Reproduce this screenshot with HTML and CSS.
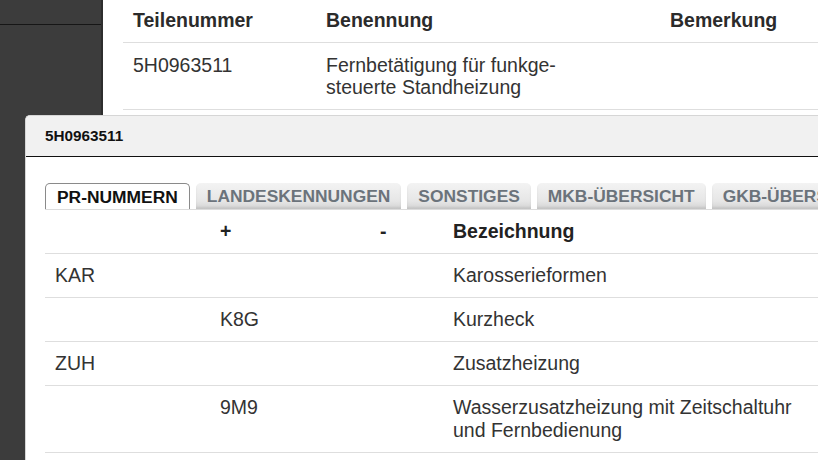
FILE: index.html
```html
<!DOCTYPE html>
<html lang="de">
<head>
<meta charset="utf-8">
<title>Teile</title>
<link rel="stylesheet" href="styles.css">
</head>
<body>
<div class="page">
  <aside class="sidebar">
    <div class="sidebar-top"></div>
  </aside>
  <main class="main">
    <table class="parts">
      <thead>
        <tr><th class="c-nr">Teilenummer</th><th class="c-name">Benennung</th><th>Bemerkung</th></tr>
      </thead>
      <tbody>
        <tr><td>5H0963511</td><td>Fernbetätigung für funkge-<br>steuerte Standheizung</td><td></td></tr>
      </tbody>
    </table>
  </main>
</div>

<section class="dialog">
  <header class="dialog-head">5H0963511</header>
  <div class="dialog-body">
    <ul class="tabs">
      <li class="tab active">PR-NUMMERN</li>
      <li class="tab">LANDESKENNUNGEN</li>
      <li class="tab">SONSTIGES</li>
      <li class="tab">MKB-ÜBERSICHT</li>
      <li class="tab">GKB-ÜBERSICHT</li>
    </ul>
    <table class="pr">
      <thead>
        <tr><th class="p1"></th><th class="p2">+</th><th class="p3">-</th><th>Bezeichnung</th></tr>
      </thead>
      <tbody>
        <tr><td>KAR</td><td></td><td></td><td>Karosserieformen</td></tr>
        <tr><td></td><td>K8G</td><td></td><td>Kurzheck</td></tr>
        <tr><td>ZUH</td><td></td><td></td><td>Zusatzheizung</td></tr>
        <tr><td></td><td>9M9</td><td></td><td>Wasserzusatzheizung mit Zeitschaltuhr<br>und Fernbedienung</td></tr>
      </tbody>
    </table>
  </div>
</section>
</body>
</html>
```

FILE: styles.css
```css
html, body {
  margin: 0;
  padding: 0;
  height: 100%;
  overflow: hidden;
  background: #fff;
  font-family: "Liberation Sans", Arial, sans-serif;
  color: #333;
}

.page {
  display: flex;
  height: 460px;
}

.sidebar {
  width: 101px;
  flex: none;
  background: #3c3c3c;
  border-right: 2px solid #2e2e2e;
}

.sidebar-top {
  height: 24px;
  border-bottom: 1px solid #161616;
}

.main {
  flex: 1;
  padding-left: 20px;
}

.parts {
  border-collapse: collapse;
  width: 100%;
  margin-top: 1px;
  font-size: 19.5px;
  line-height: 22px;
}

.parts th, .parts td {
  text-align: left;
  vertical-align: top;
  padding: 11px 10px;
  border-bottom: 1px solid #dedede;
}

.parts th {
  font-weight: bold;
  color: #2b2b2b;
  padding: 8px 10px 11px;
}

.parts .c-nr { width: 173px; }
.parts .c-name { width: 324px; }

.dialog {
  position: absolute;
  left: 25px;
  top: 115px;
  width: 820px;
  height: 360px;
  background: #fff;
  border-top: 1px solid #d6d6d6;
  border-left: 1px solid #d6d6d6;
  border-top-left-radius: 5px;
  overflow: hidden;
}

.dialog-head {
  height: 40px;
  line-height: 40px;
  background: #f1f1f1;
  border-bottom: 1px solid #111;
  padding-left: 19px;
  font-size: 15.3px;
  font-weight: bold;
  color: #111;
}

.dialog-body {
  padding: 26px 0 0 19px;
}

.tabs {
  display: flex;
  gap: 6px;
  list-style: none;
  margin: 0;
  padding: 0;
  border-bottom: 1px solid #dcdcdc;
  white-space: nowrap;
}

.tab {
  height: 26px;
  line-height: 27px;
  padding: 0 11px;
  font-size: 17.4px;
  font-weight: bold;
  color: #6b737b;
  border-radius: 5px 5px 0 0;
  background: linear-gradient(#f3f3f3, #e6e6e6 70%, #d3d3d3);
  box-shadow: inset 0 -2px 2px rgba(0,0,0,0.08);
}

.tab.active {
  background: #fff;
  color: #111;
  border: 1px solid #8a8a8a;
  border-bottom: none;
  height: 25px;
  line-height: 26px;
  padding: 0 11px;
  box-shadow: none;
}

.pr {
  border-collapse: collapse;
  width: 780px;
  font-size: 19.5px;
  line-height: 23px;
}

.pr th, .pr td {
  text-align: left;
  vertical-align: top;
  padding: 10px 10px;
  border-bottom: 1px solid #dedede;
}

.pr th {
  font-weight: bold;
  color: #222;
}

.pr td { color: #333; }

.pr .p1 { width: 145px; }
.pr .p2 { width: 140px; }
.pr .p3 { width: 53px; }
```
